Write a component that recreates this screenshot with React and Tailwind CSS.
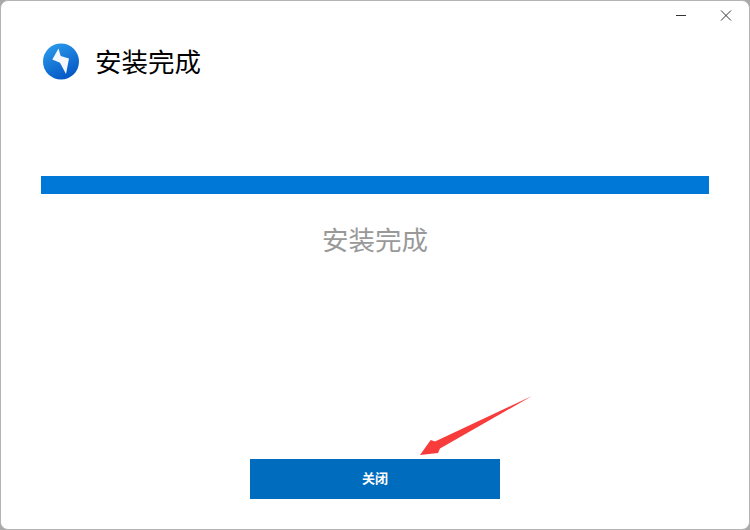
import React from "react";

const cjk = "font-['Noto_Sans_CJK_SC','Liberation_Sans',sans-serif]";

function Logo() {
  return (
    <svg width="38" height="38" viewBox="0 0 38 38" className="shrink-0">
      <defs>
        <linearGradient id="logoBg" x1="0.2" y1="0" x2="0.7" y2="1">
          <stop offset="0" stopColor="#2b9bea" />
          <stop offset="1" stopColor="#0355c4" />
        </linearGradient>
      </defs>
      <circle cx="19" cy="19.5" r="18" fill="url(#logoBg)" />
      <path d="M16.5 6.5 L10.3 17.5 L18 20.7 L24 32 L27 16.5 L18.7 14 Z" fill="#f4f8fd" />
    </svg>
  );
}

export default function App() {
  return (
    <div className={`relative h-[530px] w-[750px] overflow-hidden bg-[#a9a9a9] ${cjk}`}>
      <div className="flex h-[530px] w-[750px] flex-col rounded-lg border border-[#b4b4b4] bg-white">
        <div className="flex h-[14px] justify-end pr-[13px] pt-[9px]">
          <svg width="60" height="13" viewBox="0 0 60 13" className="shrink-0">
            <path d="M0 5.5 H10" stroke="#333" strokeWidth="1" />
            <path d="M45 0.5 L55 10.5 M55 0.5 L45 10.5" stroke="#333" strokeWidth="1" />
          </svg>
        </div>
        <div className="mt-[27px] flex h-[38px] items-center gap-[15px] pl-[41px]">
          <Logo />
          <span className="text-[26.5px] leading-[38px] text-black">安装完成</span>
        </div>
        <div className="mx-[40px] mt-[96px] h-[18px] bg-[#0078d7]" />
        <div className="mt-[26px] text-center text-[26.5px] leading-[38px] text-[#999999]">安装完成</div>
        <div className="mt-[201px] flex justify-center">
          <button className="h-[40px] w-[250px] bg-[#006cbe] pb-[2px] text-[13px] font-bold text-white">关闭</button>
        </div>
      </div>
      {/* annotation arrow on top of the window */}
      <svg width="120" height="70" viewBox="0 0 120 70" className="absolute left-[417px] top-[392px]">
        <path d="M115 4 L18 49.5 L13.7 48 L3 63 L21 61 L23 56.5 Z" fill="#f83c3c" />
      </svg>
    </div>
  );
}
